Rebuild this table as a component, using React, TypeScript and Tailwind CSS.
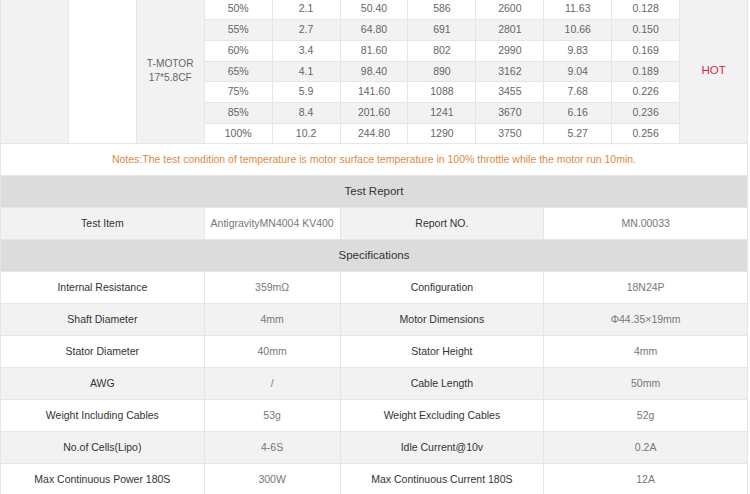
const rows = [
  ["50%", "2.1", "50.40", "586", "2600", "11.63", "0.128"],
  ["55%", "2.7", "64.80", "691", "2801", "10.66", "0.150"],
  ["60%", "3.4", "81.60", "802", "2990", "9.83", "0.169"],
  ["65%", "4.1", "98.40", "890", "3162", "9.04", "0.189"],
  ["75%", "5.9", "141.60", "1088", "3455", "7.68", "0.226"],
  ["85%", "8.4", "201.60", "1241", "3670", "6.16", "0.236"],
  ["100%", "10.2", "244.80", "1290", "3750", "5.27", "0.256"],
]

const specs = [
  ["Internal Resistance", "359mΩ", "Configuration", "18N24P"],
  ["Shaft Diameter", "4mm", "Motor Dimensions", "Φ44.35×19mm"],
  ["Stator Diameter", "40mm", "Stator Height", "4mm"],
  ["AWG", "/", "Cable Length", "50mm"],
  ["Weight Including Cables", "53g", "Weight Excluding Cables", "52g"],
  ["No.of Cells(Lipo)", "4-6S", "Idle Current@10v", "0.2A"],
  ["Max Continuous Power 180S", "300W", "Max Continuous Current 180S", "12A"],
]

const cell = "flex items-center justify-center text-center"

export default function App() {
  return (
    <main
      className="h-[494px] w-[750px] overflow-hidden bg-white"
      style={{ fontFamily: '"Liberation Sans", Arial, sans-serif' }}
    >
      <div className="-mt-px grid w-[748px] grid-cols-[repeat(11,1fr)] grid-rows-[20px_20px_20px_19px_20px_20px_19px_repeat(11,31px)] gap-px border-x border-[#e6e6e6] bg-[#e6e6e6] text-[10.5px]">
        <div className="col-start-1 row-span-7 row-start-1 bg-[#f2f2f2]" />
        <div className="col-start-2 row-span-7 row-start-1 bg-white" />
        <div className={`${cell} col-start-3 row-span-7 row-start-1 bg-[#f2f2f2] text-[10.2px] leading-[14px] text-[#666]`}>
          T-MOTOR
          <br />
          17*5.8CF
        </div>

        {rows.map((r, i) =>
          r.map((v, j) => (
            <div
              key={`${i}-${j}`}
              className={`${cell} text-[#666] ${i % 2 ? "bg-[#f2f2f2]" : "bg-white"}`}
              style={{ gridRow: i + 1, gridColumn: j + 4 }}
            >
              {v}
            </div>
          )),
        )}

        <div className={`${cell} col-start-11 row-span-7 row-start-1 bg-[#f2f2f2] text-[11.5px] text-[#d7263d]`}>
          HOT
        </div>

        <div className={`${cell} col-span-11 bg-white text-[#e0893e]`}>
          Notes:The test condition of temperature is motor surface temperature
          in 100% throttle while the motor run 10min.
        </div>

        <div className={`${cell} col-span-11 bg-[#dcdcdc] text-[11.5px] text-[#333]`}>
          Test Report
        </div>

        <div className={`${cell} col-span-3 bg-[#f2f2f2] text-[#333]`}>Test Item</div>
        <div className={`${cell} col-span-2 bg-white text-[#777]`}>AntigravityMN4004 KV400</div>
        <div className={`${cell} col-span-3 bg-[#f2f2f2] text-[#333]`}>Report NO.</div>
        <div className={`${cell} col-span-3 bg-white text-[#777]`}>MN.00033</div>

        <div className={`${cell} col-span-11 bg-[#dcdcdc] text-[11.5px] text-[#333]`}>
          Specifications
        </div>

        {specs.map((s, i) => {
          const bg = i % 2 ? "bg-[#f2f2f2]" : "bg-white"
          return [
            <div key={`a${i}`} className={`${cell} col-span-3 ${bg} text-[#333]`}>{s[0]}</div>,
            <div key={`b${i}`} className={`${cell} col-span-2 ${bg} text-[#777]`}>{s[1]}</div>,
            <div key={`c${i}`} className={`${cell} col-span-3 ${bg} text-[#333]`}>{s[2]}</div>,
            <div key={`d${i}`} className={`${cell} col-span-3 ${bg} text-[#777]`}>{s[3]}</div>,
          ]
        })}
      </div>
    </main>
  )
}
